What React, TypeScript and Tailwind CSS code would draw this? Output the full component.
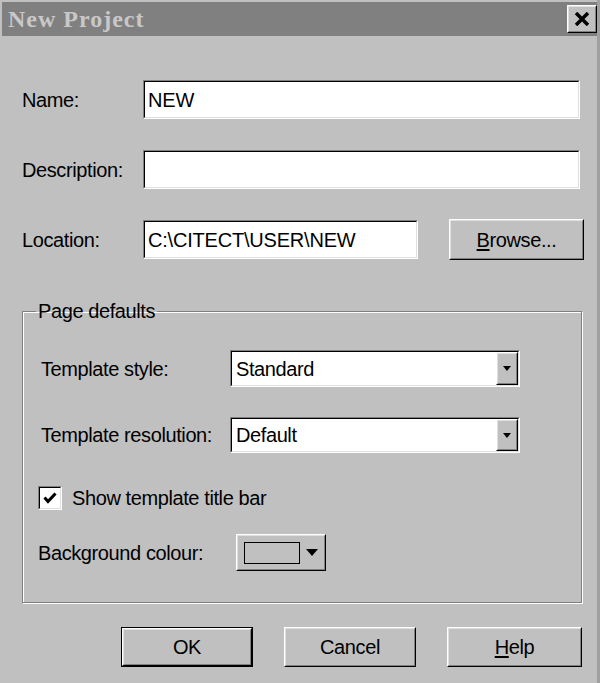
import type { ReactNode } from "react";

const raisedOuter = "border border-t-white border-l-white border-b-black border-r-black";
const raisedInner = "border border-t-[#dfdfdf] border-l-[#dfdfdf] border-b-[#808080] border-r-[#808080] bg-[#c0c0c0]";
const sunkenOuter = "border border-t-[#808080] border-l-[#808080] border-b-white border-r-white";
const sunkenInner = "border border-t-black border-l-black border-b-[#dfdfdf] border-r-[#dfdfdf] bg-white";

function Raised({ className, children }: { className?: string; children: ReactNode }) {
  return (
    <div className={`${raisedOuter} ${className ?? ""}`}>
      <div className={`${raisedInner} flex h-full w-full items-center justify-center`}>{children}</div>
    </div>
  );
}

function Field({ className, children }: { className?: string; children?: ReactNode }) {
  return (
    <div className={`${sunkenOuter} ${className ?? ""}`}>
      <div className={`${sunkenInner} flex h-full w-full items-center`}>{children}</div>
    </div>
  );
}

function Arrow() {
  return <span className="h-0 w-0 border-x-[4px] border-t-[5px] border-x-transparent border-t-black" />;
}

function Select({ value, className }: { value: string; className?: string }) {
  return (
    <Field className={className}>
      <span className="flex-1 pl-[4px]">{value}</span>
      <Raised className="h-full w-[22px]">
        <Arrow />
      </Raised>
    </Field>
  );
}

function Button({ children, isDefault, className }: { children: ReactNode; isDefault?: boolean; className?: string }) {
  if (isDefault) {
    return (
      <div className={`border border-black ${className ?? ""}`}>
        <Raised className="h-full w-full">{children}</Raised>
      </div>
    );
  }
  return <Raised className={className}>{children}</Raised>;
}

export default function App() {
  return (
    <div className="flex h-[683px] w-[600px] flex-col border-r-[3px] border-r-[#a0a0a0] bg-[#c0c0c0] pl-[2px] pt-[2px] font-['Liberation_Sans',Arial,sans-serif] text-[20px] tracking-[-0.4px] text-black">
      {/* title bar */}
      <div className="flex h-[34px] items-center justify-between bg-[#808080] pl-[6px]">
        <span className="font-['Liberation_Serif',serif] text-[24px] font-bold tracking-[1px] text-[#c8c8c8]">
          New Project
        </span>
        <Raised className="h-[28px] w-[30px]">
          <svg width="16" height="14" viewBox="0 0 16 14">
            <path d="M2 1 L14 13 M14 1 L2 13" stroke="black" strokeWidth="3.5" />
          </svg>
        </Raised>
      </div>

      <div className="flex flex-col pl-[20px]">
        <div className="mt-[44px] flex items-center">
          <span className="w-[121px]">Name:</span>
          <Field className="h-[39px] w-[437px]">
            <span className="pl-[3px] tracking-[-0.2px]">NEW</span>
          </Field>
        </div>

        <div className="mt-[31px] flex items-center">
          <span className="w-[121px]">Description:</span>
          <Field className="h-[39px] w-[437px]" />
        </div>

        <div className="mt-[30px] flex items-center">
          <span className="w-[121px]">Location:</span>
          <Field className="h-[39px] w-[275px]">
            <span className="pl-[3px] tracking-[-0.2px]">C:\CITECT\USER\NEW</span>
          </Field>
          <Button className="ml-[31px] h-[41px] w-[135px]">
            <span>
              <span className="underline underline-offset-2">B</span>rowse...
            </span>
          </Button>
        </div>

        <fieldset className="mt-[36px] w-[560px] border border-[#808080] pb-[31px] pl-[15px] pt-[24px] shadow-[1px_1px_0_#fff,inset_1px_1px_0_#fff]">
          <legend className="-ml-[2px] px-[2px]">Page defaults</legend>

          <div className="flex items-center pl-[3px]">
            <span className="w-[189px]">Template style:</span>
            <Select value="Standard" className="h-[37px] w-[290px]" />
          </div>

          <div className="mt-[30px] flex items-center pl-[3px]">
            <span className="w-[189px]">Template resolution:</span>
            <Select value="Default" className="h-[36px] w-[290px]" />
          </div>

          <div className="mt-[30px] flex items-center">
            <div className={`${sunkenOuter} h-[24px] w-[24px]`}>
              <div className={`${sunkenInner} flex h-full w-full items-center justify-center`}>
                <svg width="14" height="12" viewBox="0 0 14 12">
                  <path d="M1.5 5.5 L5 9.5 L12.5 1.5" fill="none" stroke="black" strokeWidth="3" />
                </svg>
              </div>
            </div>
            <span className="ml-[10px]">Show template title bar</span>
          </div>

          <div className="mt-[21px] flex items-center">
            <span className="w-[198px]">Background colour:</span>
            <Raised className="h-[37px] w-[90px]">
              <div className="flex w-full items-center pl-[6px]">
                <div className="h-[22px] w-[56px] border border-black bg-[#c0c0c0]" />
                <span className="ml-[6px] h-0 w-0 border-x-[6px] border-t-[7px] border-x-transparent border-t-black" />
              </div>
            </Raised>
          </div>
        </fieldset>

        <div className="mt-[24px] flex">
          <Button isDefault className="ml-[99px] h-[40px] w-[132px]">
            OK
          </Button>
          <Button className="ml-[31px] h-[40px] w-[132px]">Cancel</Button>
          <Button className="ml-[31px] h-[40px] w-[135px]">
            <span>
              <span className="underline underline-offset-2">H</span>elp
            </span>
          </Button>
        </div>
      </div>
    </div>
  );
}
